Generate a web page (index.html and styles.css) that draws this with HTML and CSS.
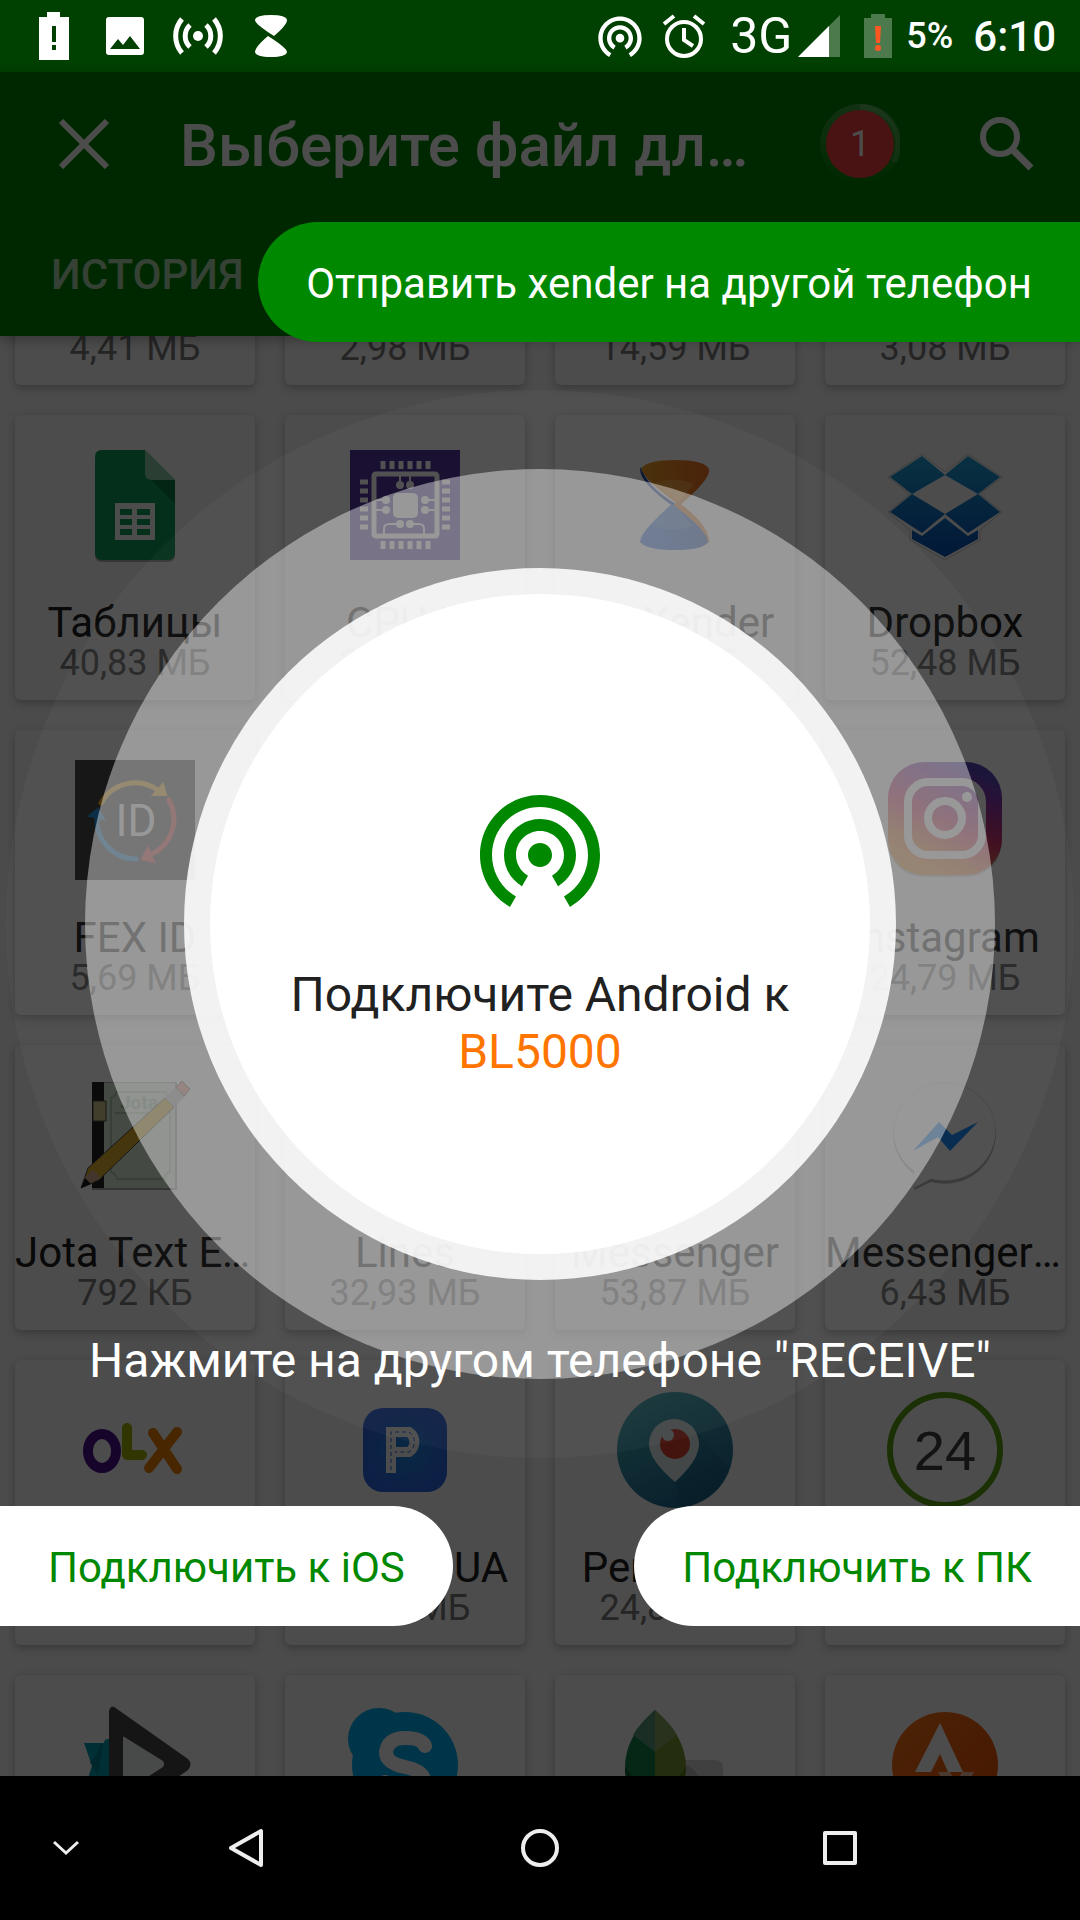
FILE: index.html
```html
<!DOCTYPE html>
<html lang="ru">
  <head>
    <meta charset="UTF-8" />
    <meta name="viewport" content="width=device-width, initial-scale=1.0" />
    <title>Xender</title>
    <link rel="stylesheet" href="styles.css">
  </head>
  <body>
    <div class="screen">
      <!-- Status bar -->
      <div class="status-bar">
        <div class="status-left">
          <svg width="48" height="48" viewBox="0 0 48 48" fill="#fff">
            <path fill-rule="evenodd" d="M17 0h13v5h9v43H9V5h8zM22 14v16h4V14zM22 33v5h4v-5z" />
          </svg>
          <svg width="48" height="48" viewBox="0 0 48 48" fill="#fff">
            <path fill-rule="evenodd" d="M8 5h32q3 0 3 3v32q0 3-3 3H8q-3 0-3-3V8q0-3 3-3zM9 37h30l-10-13-7 9-5-6z" />
          </svg>
          <svg width="52" height="48" viewBox="0 0 52 48" fill="none" stroke="#fff" stroke-width="5">
            <circle cx="26" cy="24" r="5" fill="#fff" stroke="none" />
            <path d="M18 13a15 15 0 0 0 0 22M34 13a15 15 0 0 1 0 22M10 7a26 26 0 0 0 0 34M42 7a26 26 0 0 1 0 34" />
          </svg>
          <svg width="48" height="48" viewBox="0 0 48 48" fill="#fff">
            <path d="M8 8Q9 3 24 3q15 0 16 5 0 5-13 16Q8 12 8 8zM8 40q0-5 13-16 19 12 19 16-1 5-16 5T8 40z" />
          </svg>
        </div>
        <div class="status-right">
          <svg width="52" height="52" viewBox="0 0 24 24" fill="#fff">
            <path d="M12 11c-1.1 0-2 .9-2 2s.9 2 2 2 2-.9 2-2-.9-2-2-2zm6 2c0-3.31-2.69-6-6-6s-6 2.69-6 6c0 2.22 1.21 4.15 3 5.19l1-1.74c-1.19-.7-2-1.97-2-3.45 0-2.21 1.79-4 4-4s4 1.79 4 4c0 1.48-.81 2.75-2 3.45l1 1.74c1.79-1.04 3-2.97 3-5.19zM12 3C6.48 3 2 7.48 2 13c0 3.7 2.01 6.92 4.99 8.65l1-1.73C5.61 18.53 4 15.96 4 13c0-4.42 3.58-8 8-8s8 3.58 8 8c0 2.96-1.61 5.53-4 6.92l1 1.73c2.99-1.73 5-4.95 5-8.65 0-5.52-4.48-10-10-10z" />
          </svg>
          <svg class="alarm" width="44" height="44" viewBox="0 0 44 44" fill="none" stroke="#fff" stroke-width="4">
            <circle cx="22" cy="25" r="17" />
            <path d="M22 14v12l9 6M2 10l10-8M42 10L32 2" />
          </svg>
          <span class="network">3G</span>
          <svg class="signal" width="42" height="42" viewBox="0 0 42 42">
            <path d="M0 42L42 0v42z" fill="#4c7a4c" />
            <path d="M0 42L31 11v31z" fill="#fff" />
          </svg>
          <svg class="battery" width="28" height="44" viewBox="0 0 28 44">
            <path d="M7 0h14v4h7v40H0V4h7z" fill="#4c7a4c" />
            <path d="M11 12h6l-1 17h-4z" fill="#ff5722" />
            <circle cx="14" cy="34" r="3" fill="#ff5722" />
          </svg>
          <span class="percent">5%</span>
          <span class="clock">6:10</span>
        </div>
      </div>

      <div class="app">
        <header class="header">
          <div class="toolbar">
            <button class="icon-btn" aria-label="Закрыть">
              <svg width="50" height="50" viewBox="0 0 50 50" stroke="#fff" stroke-width="6">
                <path d="M2 2l46 46M48 2L2 48" />
              </svg>
            </button>
            <h1>Выберите файл для отправки</h1>
            <div class="badge">
              <svg width="80" height="80" viewBox="0 0 80 80">
                <defs>
                  <linearGradient id="ring" x1="0" y1="0" x2="0" y2="1">
                    <stop offset="0" stop-color="#fff" stop-opacity=".25" />
                    <stop offset="1" stop-color="#fff" stop-opacity="0" />
                  </linearGradient>
                </defs>
                <circle cx="40" cy="40" r="40" fill="url(#ring)" />
                <path d="M40 3A37 37 0 0 1 74 58" fill="none" stroke="#fff" stroke-opacity=".18" stroke-width="6" />
                <circle cx="40" cy="40" r="34" fill="#f44040" />
              </svg>
              <span>1</span>
            </div>
            <button class="icon-btn" aria-label="Поиск">
              <svg width="54" height="54" viewBox="0 0 54 54" fill="none" stroke="#fff" stroke-width="6">
                <circle cx="20" cy="20" r="17" />
                <path d="M32 32l19 19" stroke-width="7" />
              </svg>
            </button>
          </div>
          <nav class="tabs"><a href="#history">История</a></nav>
        </header>

        <main class="apps">
          <div class="grid">
            <div class="card"><div class="icon"></div><div class="name"></div><div class="size">4,41 МБ</div></div>
            <div class="card"><div class="icon"></div><div class="name"></div><div class="size">2,98 МБ</div></div>
            <div class="card"><div class="icon"></div><div class="name"></div><div class="size">14,59 МБ</div></div>
            <div class="card"><div class="icon"></div><div class="name"></div><div class="size">3,08 МБ</div></div>

            <div class="card">
              <svg class="icon" viewBox="0 0 120 120">
                <path d="M27 7h43l30 30v72q0 8-7 8H27q-7 0-7-8V14q0-7 7-7z" fill="#000" opacity=".3" />
                <path d="M27 5h43l30 30v73q0 7-7 7H27q-7 0-7-7V12q0-7 7-7z" fill="#0f9d58" />
                <path d="M76 35h24v24z" fill="#0b8043" />
                <path d="M70 5l30 30H77q-7 0-7-7z" fill="#8fd0af" />
                <path fill-rule="evenodd" fill="#fff" d="M40 58h40v37H40zM45 64v6h12v-6zM62 64v6h13v-6zM45 74v6h12v-6zM62 74v6h13v-6zM45 84v6h12v-6zM62 84v6h13v-6z" />
              </svg>
              <div class="name">Таблицы</div>
              <div class="size">40,83 МБ</div>
            </div>
            <div class="card">
              <svg class="icon" viewBox="0 0 120 120" fill="none" stroke="#fff">
                <rect x="5" y="5" width="110" height="110" fill="#412293" stroke="none" />
                <rect x="29" y="29" width="63" height="62" rx="2" stroke-width="5" />
                <rect x="48" y="48" width="25" height="25" rx="5" fill="#fff" stroke="none" />
                <!-- pins -->
                <path stroke-width="5" d="M38 16v8M47 16v8M56 16v8M65 16v8M74 16v8M83 16v8M38 96v8M47 96v8M56 96v8M65 96v8M74 96v8M83 96v8M15 37h8M15 46h8M15 55h8M15 64h8M15 73h8M15 82h8M97 37h8M97 46h8M97 55h8M97 64h8M97 73h8M97 82h8" />
                <path stroke-width="2" d="M55 30v10M65 30v10M30 55h11M30 65h11M80 55h12M80 65h12M55 79H44q-5 0-5 5v6M65 79h9q5 0 5 5v6" />
                <g fill="#fff" stroke="none">
                  <circle cx="55" cy="40" r="4" /><circle cx="65" cy="40" r="4" />
                  <circle cx="41" cy="55" r="4" /><circle cx="41" cy="65" r="4" />
                  <circle cx="80" cy="55" r="4" /><circle cx="80" cy="65" r="4" />
                  <circle cx="55" cy="79" r="4" /><circle cx="65" cy="79" r="4" />
                </g>
              </svg>
              <div class="name">CPU-Z</div>
              <div class="size">2,87 МБ</div>
            </div>
            <div class="card">
              <svg class="icon" viewBox="0 0 120 120">
                <defs>
                  <linearGradient id="sand"><stop offset="0" stop-color="#e89410" /><stop offset="1" stop-color="#e85c10" /></linearGradient>
                  <linearGradient id="water"><stop offset="0" stop-color="#1a62f0" /><stop offset="1" stop-color="#1048b4" /></linearGradient>
                </defs>
                <path d="M25 24q0 14 34 38 20 14 35 35-3-19-33-38Q32 42 26 22z" fill="#0c3ca8" />
                <path d="M26 24q5-9 34-9t34 9q2 10-29 36Q30 36 26 24z" fill="url(#sand)" />
                <path d="M62 56q34 25 32 43l-4-8L58 62z" fill="#e87820" />
                <path d="M25 97q0-10 32-38 35 26 36 38-5 8-33 8t-35-8z" fill="url(#water)" />
                <path d="M37 79l20-20 21 22q-20 8-41-2z" fill="#50a0d0" opacity=".4" />
                <path d="M40 38q20-7 39 1L64 57q-13-8-24-19z" fill="#ffd060" opacity=".35" />
              </svg>
              <div class="name">My Xender</div>
              <div class="size">5,93 МБ</div>
            </div>
            <div class="card">
              <svg class="icon" viewBox="0 0 120 120">
                <defs>
                  <linearGradient id="box" gradientUnits="userSpaceOnUse" x1="0" y1="10" x2="0" y2="112">
                    <stop offset="0" stop-color="#1fa4dc" /><stop offset="1" stop-color="#0650b8" />
                  </linearGradient>
                </defs>
                <path d="M37 9l23 18 23-18 34 23-22 17 22 18-22 18v10l-35 20-35-20V85L3 67l22-18L3 32z" fill="#fff" stroke="#000" stroke-opacity=".2" />
                <g fill="url(#box)">
                  <path d="M37 11l23 19-33 19L5 32z" />
                  <path d="M83 11L60 30l33 19 22-17z" />
                  <path d="M27 49l33 20-23 19L5 67z" />
                  <path d="M93 49L60 69l23 19 32-21z" />
                  <path d="M60 73l23 18 10-6v9l-33 18-33-18v-9l10 6z" />
                </g>
              </svg>
              <div class="name">Dropbox</div>
              <div class="size">52,48 МБ</div>
            </div>

            <div class="card">
              <svg class="icon" viewBox="0 0 120 120" fill="none" stroke-width="5" stroke-linecap="round">
                <path d="M0 0h120v120H0z" fill="#363636" />
                <path d="M26 43A39 39 0 0 1 84 31" stroke="#f0a818" />
                <path d="M88 24l3 11H78z" fill="#f0a818" stroke="#f0a818" stroke-width="2" />
                <path d="M94 40A39 39 0 0 1 77 94" stroke="#e83c3c" />
                <path d="M73 88l6 14-12-3z" fill="#e83c3c" stroke="#e83c3c" stroke-width="2" />
                <path d="M61 99A39 39 0 0 1 22 57" stroke="#1488d8" />
                <path d="M23 49l6 10-15-3z" fill="#1488d8" stroke="#1488d8" stroke-width="2" />
                <text x="61" y="76" class="fex-text">ID</text>
              </svg>
              <div class="name">FEX ID</div>
              <div class="size">5,69 МБ</div>
            </div>
            <div class="card"></div>
            <div class="card"></div>
            <div class="card">
              <svg class="icon" viewBox="0 0 120 120">
                <defs>
                  <linearGradient id="insta" x1=".1" y1="1" x2=".6" y2="0">
                    <stop offset="0" stop-color="#f0a030" /><stop offset=".25" stop-color="#f07a28" />
                    <stop offset=".55" stop-color="#c82058" /><stop offset=".85" stop-color="#7a20a0" /><stop offset="1" stop-color="#4830b0" />
                  </linearGradient>
                </defs>
                <rect x="3" y="5" width="114" height="112" rx="36" fill="#000" opacity=".25" />
                <rect x="3" y="2" width="114" height="113" rx="36" fill="url(#insta)" />
                <rect x="23" y="22" width="74" height="73" rx="20" fill="none" stroke="#fff" stroke-width="8" />
                <circle cx="60" cy="58" r="17" fill="none" stroke="#fff" stroke-width="8" />
                <circle cx="82" cy="37" r="5" fill="#fff" />
              </svg>
              <div class="name">Instagram</div>
              <div class="size">24,79 МБ</div>
            </div>

            <div class="card">
              <svg class="icon" viewBox="0 0 120 120">
                <path d="M17 7h85v108H17z" fill="#000" opacity=".4" />
                <path d="M18 8h82v105H18z" fill="#cfe8cc" />
                <path d="M17 7h12v106H17z" fill="#0a0a0a" />
                <path d="M18 26h13v20H18z" fill="#c8bc80" stroke="#3c3a20" />
                <path d="M41 17h50q0 5 4 6v74q-5 1-6 7H42q-1-5-6-7V23q4-1 5-6zM40 38h50" fill="none" stroke="#a4c0a0" stroke-width="2" />
                <text x="45" y="34" class="jota-text">Jota</text>
                <path d="M6 113l7-20L90 23l9 9-75 73z" fill="#d4a017" stroke="#333" />
                <path d="M90 23l12-12 10 9-13 12z" fill="#bdbdbd" />
                <path d="M101 12l6-6 8 8-6 7z" fill="#f08878" stroke="#555" />
                <path d="M18 95l8 8-12 6-5-6z" fill="#c8a080" />
                <path d="M6 113l4-10 6 6z" fill="#000" />
              </svg>
              <div class="name">Jota Text Editor</div>
              <div class="size">792 КБ</div>
            </div>
            <div class="card">
              <div class="icon"></div>
              <div class="name">Lines</div>
              <div class="size">32,93 МБ</div>
            </div>
            <div class="card">
              <div class="icon"></div>
              <div class="name">Messenger</div>
              <div class="size">53,87 МБ</div>
            </div>
            <div class="card">
              <svg class="icon" viewBox="0 0 120 120">
                <path d="M29 99A51 49 0 1 1 46 107L29 115z" fill="#000" opacity=".3" />
                <path d="M29 96A51 49 0 1 1 46 104L29 113z" fill="#fff" stroke="#000" stroke-opacity=".12" />
                <path d="M28 76l26-29 13 13 26-13-28 29-12-14z" fill="#0084ff" />
              </svg>
              <div class="name">Messenger Lite</div>
              <div class="size">6,43 МБ</div>
            </div>

            <div class="card">
              <svg class="icon" viewBox="0 0 120 120" fill="none" stroke-linecap="round">
                <ellipse cx="27" cy="61" rx="14" ry="17" stroke="#4b1090" stroke-width="10" />
                <path d="M52 38v27h15" stroke="#a4b400" stroke-width="10" stroke-linejoin="round" />
                <path d="M78 43l24 36M102 42L74 78" stroke="#f08000" stroke-width="10" />
              </svg>
            </div>
            <div class="card">
              <svg class="icon" viewBox="0 0 120 120">
                <defs>
                  <radialGradient id="park"><stop offset="0" stop-color="#1c88e0" /><stop offset="1" stop-color="#2f68e8" /></radialGradient>
                </defs>
                <rect x="18" y="18" width="84" height="84" rx="20" fill="url(#park)" />
                <path d="M46 83V42h18a12 12 0 0 1 0 20H46" fill="none" stroke="#fff" stroke-width="10" />
                <path d="M46 80V42h18a12 12 0 0 1 0 20H50" fill="none" stroke="#2f68e8" stroke-dasharray="4 3" />
              </svg>
              <div class="name">Parking UA</div>
              <div class="size">3,26 МБ</div>
            </div>
            <div class="card">
              <svg class="icon" viewBox="0 0 120 120">
                <defs>
                  <linearGradient id="peri" x1=".2" y1="0" x2=".7" y2="1"><stop offset="0" stop-color="#4ab4c0" /><stop offset="1" stop-color="#1c6890" /></linearGradient>
                </defs>
                <circle cx="60" cy="60" r="58" fill="url(#peri)" />
                <path d="M82 42l32 36q-14 34-48 39l-6-25z" fill="#125070" opacity=".2" />
                <path d="M60 92Q34 70 34 54a25 25 0 0 1 50 0q0 16-24 38z" fill="#e0eef0" />
                <circle cx="60" cy="54" r="15" fill="#e04030" />
                <circle cx="53" cy="45" r="6" fill="#e0eef0" />
              </svg>
              <div class="name">Periscope</div>
              <div class="size">24,80 МБ</div>
            </div>
            <div class="card">
              <svg class="icon" viewBox="0 0 120 120">
                <circle cx="60" cy="60" r="55" fill="none" stroke="#5ca010" stroke-width="6" />
                <text x="60" y="80" class="bank-text">24</text>
              </svg>
            </div>

            <div class="card">
              <svg class="icon" viewBox="0 0 120 120">
                <path d="M9 38h20q0-4 5-4v52H9l8-25z" fill="#00a0b4" />
                <path d="M25 39q-2 11-10 18l8 14 5-33z" fill="#008394" />
                <path d="M34 6q2-8 8-2l71 50q5 5 0 11l-71 50q-8 4-8-4z" fill="#484848" />
                <path d="M48 33q0-3 3 0l37 23q2 3 0 6L51 86q-3 2-3-2z" fill="#f0f4f5" />
              </svg>
            </div>
            <div class="card">
              <svg class="icon" viewBox="0 0 120 120">
                <circle cx="34" cy="34" r="31" fill="#00aff0" />
                <circle cx="60" cy="60" r="53" fill="#00aff0" />
                <path d="M80 41Q77 33 60 33T41 47q0 11 19 15t19 14-19 13q-14 0-20-12" fill="none" stroke="#fff" stroke-width="14" stroke-linecap="round" />
              </svg>
            </div>
            <div class="card">
              <svg class="icon" viewBox="0 0 120 120">
                <path d="M66 55h34q8 0 8 8v52H66z" fill="#d8d8d8" />
                <path d="M71 60q8 2 16 16H71z" fill="#b8b8b8" />
                <path d="M40 5Q10 32 10 62t30 53z" fill="#14804a" />
                <path d="M40 5Q24 19 18 30l22 17z" fill="#5a9a80" />
                <path d="M10 62q0 10 5 25l25 15z" fill="#0b5e34" />
                <path d="M40 5q31 27 31 57t-31 53z" fill="#7a9a30" />
                <path d="M40 5q16 14 22 25L40 47z" fill="#86a860" />
                <path d="M71 62q0 10-5 25l-26 15z" fill="#5c8020" />
              </svg>
            </div>
            <div class="card">
              <svg class="icon" viewBox="0 0 120 120">
                <defs>
                  <linearGradient id="run" x1="0" y1="0" x2="1" y2="1"><stop offset="0" stop-color="#ff7a1a" /><stop offset="1" stop-color="#e84a00" /></linearGradient>
                </defs>
                <circle cx="60" cy="60" r="53" fill="url(#run)" />
                <path d="M55 18l23 49H63l-8-18-9 18H30z" fill="#fff" />
                <path d="M53 67h12l6 12 6-12h12L71 101z" fill="#fff" opacity=".6" />
              </svg>
            </div>
          </div>
        </main>

        <!-- Connection overlay -->
        <div class="overlay">
          <button class="pill pill-green">Отправить xender на другой телефон</button>
          <div class="radar">
            <div class="ring ring-outer">
              <div class="ring ring-middle">
                <div class="ring ring-inner">
                  <div class="ring core">
                    <svg width="144" height="144" viewBox="0 0 24 24" fill="#008800">
                      <path d="M12 11c-1.1 0-2 .9-2 2s.9 2 2 2 2-.9 2-2-.9-2-2-2zm6 2c0-3.31-2.69-6-6-6s-6 2.69-6 6c0 2.22 1.21 4.15 3 5.19l1-1.74c-1.19-.7-2-1.97-2-3.45 0-2.21 1.79-4 4-4s4 1.79 4 4c0 1.48-.81 2.75-2 3.45l1 1.74c1.79-1.04 3-2.97 3-5.19zM12 3C6.48 3 2 7.48 2 13c0 3.7 2.01 6.92 4.99 8.65l1-1.73C5.61 18.53 4 15.96 4 13c0-4.42 3.58-8 8-8s8 3.58 8 8c0 2.96-1.61 5.53-4 6.92l1 1.73c2.99-1.73 5-4.95 5-8.65 0-5.52-4.48-10-10-10z" />
                    </svg>
                    <p>Подключите Android к<br><span class="device">BL5000</span></p>
                  </div>
                </div>
              </div>
            </div>
            <p class="hint">Нажмите на другом телефоне "RECEIVE"</p>
          </div>
          <div class="actions">
            <button class="pill pill-left">Подключить к iOS</button>
            <button class="pill pill-right">Подключить к ПК</button>
          </div>
        </div>
      </div>

      <!-- System navigation -->
      <nav class="nav-bar">
        <button aria-label="Скрыть">
          <svg width="26" height="16" viewBox="0 0 26 16" fill="none" stroke="#eee" stroke-width="3"><path d="M1 2l12 11L25 2" /></svg>
        </button>
        <button aria-label="Назад">
          <svg width="38" height="40" viewBox="0 0 38 40" fill="none" stroke="#eee" stroke-width="4" stroke-linejoin="round"><path d="M34 3v34L4 20z" /></svg>
        </button>
        <button aria-label="Домой">
          <svg width="40" height="40" viewBox="0 0 40 40" fill="none" stroke="#eee" stroke-width="4"><circle cx="20" cy="20" r="17" /></svg>
        </button>
        <button aria-label="Недавние">
          <svg width="36" height="36" viewBox="0 0 36 36" fill="none" stroke="#eee" stroke-width="4" stroke-linejoin="round"><path d="M3 3h30v30H3z" /></svg>
        </button>
      </nav>
    </div>
  </body>
</html>
```

FILE: styles.css
```css
* {
  padding: 0;
  margin: 0;
  box-sizing: border-box;
}

body {
  font-family: Roboto, "Noto Sans", sans-serif;
  background: #000;
}

button {
  border: none;
  background: none;
  font-family: inherit;
  cursor: pointer;
}

svg {
  display: block;
  flex-shrink: 0;
}

.screen {
  display: flex;
  flex-direction: column;
  height: 100vh;
  overflow: hidden;
}

/* Status bar */
.status-bar {
  display: flex;
  justify-content: space-between;
  height: 72px;
  padding: 0 24px 0 30px;
  background: #004000;
  color: #fff;
}

.status-left,
.status-right {
  display: flex;
  align-items: center;
}

.status-left {
  gap: 23px;
}

.alarm {
  margin: 0 24px 0 16px;
}

.network {
  font-size: 50px;
  line-height: 72px;
}

.signal {
  margin-left: 6px;
}

.battery {
  margin: 0 14px 0 24px;
}

.percent {
  font-size: 36px;
  font-weight: 500;
}

.clock {
  margin-left: 20px;
  font-size: 42px;
  font-weight: 500;
}

/* App */
.app {
  display: flex;
  flex-direction: column;
  flex: 1;
  min-height: 0;
  position: relative;
}

.header {
  position: relative;
  z-index: 1;
  height: 264px;
  background: #008800;
  color: #fff;
  box-shadow: 0 4px 12px rgba(0, 0, 0, 0.3);
}

.toolbar {
  display: flex;
  align-items: center;
  height: 144px;
  padding: 0 46px 0 59px;
}

.toolbar h1 {
  flex: 1;
  min-width: 0;
  margin: 0 50px 0 71px;
  padding-top: 4px;
  font-size: 60px;
  font-weight: 500;
  line-height: 72px;
  white-space: nowrap;
  overflow: hidden;
  text-overflow: ellipsis;
}

.badge {
  display: grid;
  place-items: center;
  margin-right: 80px;
  font-size: 36px;
}

.badge > * {
  grid-area: 1 / 1;
}

.tabs a {
  display: block;
  padding: 35px 51px;
  color: rgba(255, 255, 255, 0.7);
  font-size: 42px;
  font-weight: 500;
  line-height: 48px;
  text-decoration: none;
  text-transform: uppercase;
}

.apps {
  flex: 1;
  min-height: 0;
  overflow: hidden;
  background: #fafafa;
}

/* list is scrolled, first row goes under the header */
.grid {
  display: grid;
  grid-template-columns: repeat(4, minmax(0, 1fr));
  grid-auto-rows: 285px;
  gap: 30px;
  margin-top: -236px;
  padding: 0 15px;
}

.card {
  padding-top: 30px;
  background: #fff;
  border-radius: 6px;
  box-shadow: 0 3px 8px rgba(0, 0, 0, 0.25);
  text-align: center;
}

.icon {
  width: 120px;
  height: 120px;
  margin: 0 auto 38px;
}

.name {
  height: 40px;
  overflow: hidden;
  overflow: clip;
  overflow-clip-margin: 10px;
  color: #212121;
  font-size: 42px;
  line-height: 40px;
  white-space: nowrap;
  text-overflow: ellipsis;
}

.size {
  color: #7c7c7c;
  font-size: 36px;
  line-height: 40px;
}

.fex-text {
  fill: #fff;
  font-size: 44px;
  text-anchor: middle;
}

.jota-text {
  fill: #8fae8c;
  font-size: 19px;
  font-weight: 700;
}

.bank-text {
  fill: #404040;
  font-family: "Liberation Sans", sans-serif;
  font-size: 56px;
  text-anchor: middle;
}

/* Overlay */
.overlay {
  position: absolute;
  inset: 0;
  z-index: 2;
  display: flex;
  flex-direction: column;
  justify-content: space-between;
  padding: 150px 0;
  background: rgba(0, 0, 0, 0.7);
}

.pill {
  height: 120px;
  padding: 2px 48px 0;
  background: #fff;
  color: #008800;
  font-size: 42px;
}

.pill-green {
  align-self: flex-end;
  background: #008800;
  color: #fff;
}

.pill-green,
.pill-right {
  border-radius: 60px 0 0 60px;
}

.pill-left {
  border-radius: 0 60px 60px 0;
}

.radar {
  position: relative;
  padding: 0 6px;
}

.ring {
  width: 100%;
  aspect-ratio: 1;
  border-radius: 50%;
}

.ring-outer {
  padding: 79px;
  background: rgba(255, 255, 255, 0.03);
}

.ring-middle {
  padding: 99px;
  background: rgba(255, 255, 255, 0.41);
}

.ring-inner {
  padding: 26px;
  background: rgba(255, 255, 255, 0.87);
}

.core {
  display: flex;
  flex-direction: column;
  align-items: center;
  justify-content: center;
  gap: 45px;
  padding-top: 9px;
  background: #fff;
  color: #212121;
  font-size: 48px;
  line-height: 57px;
  text-align: center;
}

.device {
  color: #ff7500;
}

.hint {
  position: absolute;
  left: 0;
  right: 0;
  bottom: 67px;
  color: #fff;
  font-size: 48px;
  line-height: 60px;
  text-align: center;
}

.actions {
  display: flex;
  justify-content: space-between;
}

/* Navigation bar */
.nav-bar {
  display: grid;
  grid-template-columns: 11fr 19fr 30fr 20fr 10fr;
  align-items: center;
  justify-items: center;
  height: 144px;
  background: #000;
}
```
